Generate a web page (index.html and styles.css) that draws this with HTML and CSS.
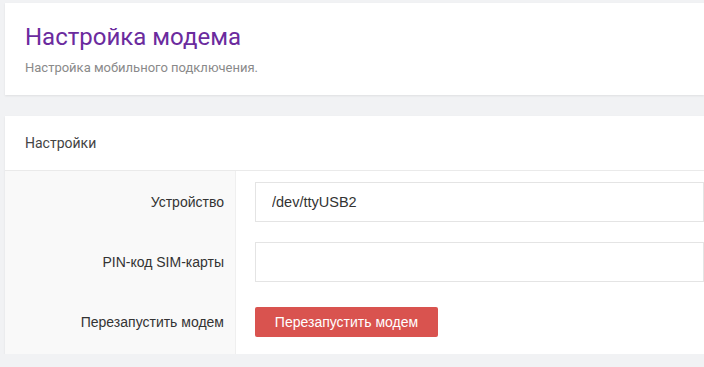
FILE: index.html
```html
<!doctype html>
<html>
<head>
<meta charset="UTF-8">
<title>Настройка модема</title>
<link rel="stylesheet" href="styles.css">
</head>
<body>
<div class="page">
    <div class="card page-head">
        <h1>Настройка модема</h1>
        <p>Настройка мобильного подключения.</p>
    </div>

    <div class="card settings">
        <div class="card-title">Настройки</div>
        <div class="form">
            <div class="row">
                <label class="lbl">Устройство</label>
                <div class="field"><input class="input" type="text" value="/dev/ttyUSB2"></div>
            </div>
            <div class="row">
                <label class="lbl">PIN-код SIM-карты</label>
                <div class="field"><input class="input" type="text" value=""></div>
            </div>
            <div class="row">
                <label class="lbl">Перезапустить модем</label>
                <div class="field"><button class="btn-danger">Перезапустить модем</button></div>
            </div>
        </div>
    </div>
</div>
</body>
</html>
```

FILE: styles.css
```css
body {
    margin: 0;
    background: #f1f2f4;
    font-family: "Liberation Sans", Arial, sans-serif;
    color: #333;
    overflow: hidden;
}

.page {
    padding: 3px 0 0 5px;
}

.card {
    background: #fff;
    box-shadow: 0 1px 2px rgba(0, 0, 0, 0.08);
}

.page-head {
    height: 92px;
    padding: 0 20px;
    box-sizing: border-box;
    display: flex;
    flex-direction: column;
}

.page-head h1 {
    margin: 19px 0 0;
    font-family: Roboto, sans-serif;
    font-weight: 400;
    font-size: 24px;
    line-height: 30px;
    color: #6b2b9e;
}

.page-head p {
    margin: 8px 0 0;
    font-family: Roboto, sans-serif;
    font-size: 13px;
    color: #8a8a8a;
}

.settings {
    margin-top: 21px;
}

.card-title {
    height: 55px;
    box-sizing: border-box;
    padding: 0 20px;
    display: flex;
    align-items: center;
    font-family: Roboto, sans-serif;
    font-size: 14px;
    color: #444;
    border-bottom: 1px solid #eaeaea;
}

.form {
    display: flex;
    flex-direction: column;
    gap: 20px;
    padding: 11px 0 12px;
    background: linear-gradient(to right, #f9f9f9 0, #f9f9f9 230px, #efefef 230px, #efefef 231px, #fff 231px);
}

.row {
    display: grid;
    grid-template-columns: 231px 1fr;
    align-items: center;
    min-height: 40px;
}

.lbl {
    text-align: right;
    padding-right: 12px;
    font-size: 14px;
    color: #333;
}

.field {
    padding-left: 19px;
}

.input {
    display: block;
    width: 100%;
    height: 40px;
    box-sizing: border-box;
    border: 1px solid #e4e4e4;
    padding: 0 16px;
    font-family: "Liberation Sans", Arial, sans-serif;
    font-size: 14.5px;
    color: #333;
    outline: none;
}

.btn-danger {
    display: block;
    width: 183px;
    height: 30px;
    border: none;
    border-radius: 2px;
    background: #d9534f;
    color: #fff;
    font-family: "Liberation Sans", Arial, sans-serif;
    font-size: 14px;
}
```
